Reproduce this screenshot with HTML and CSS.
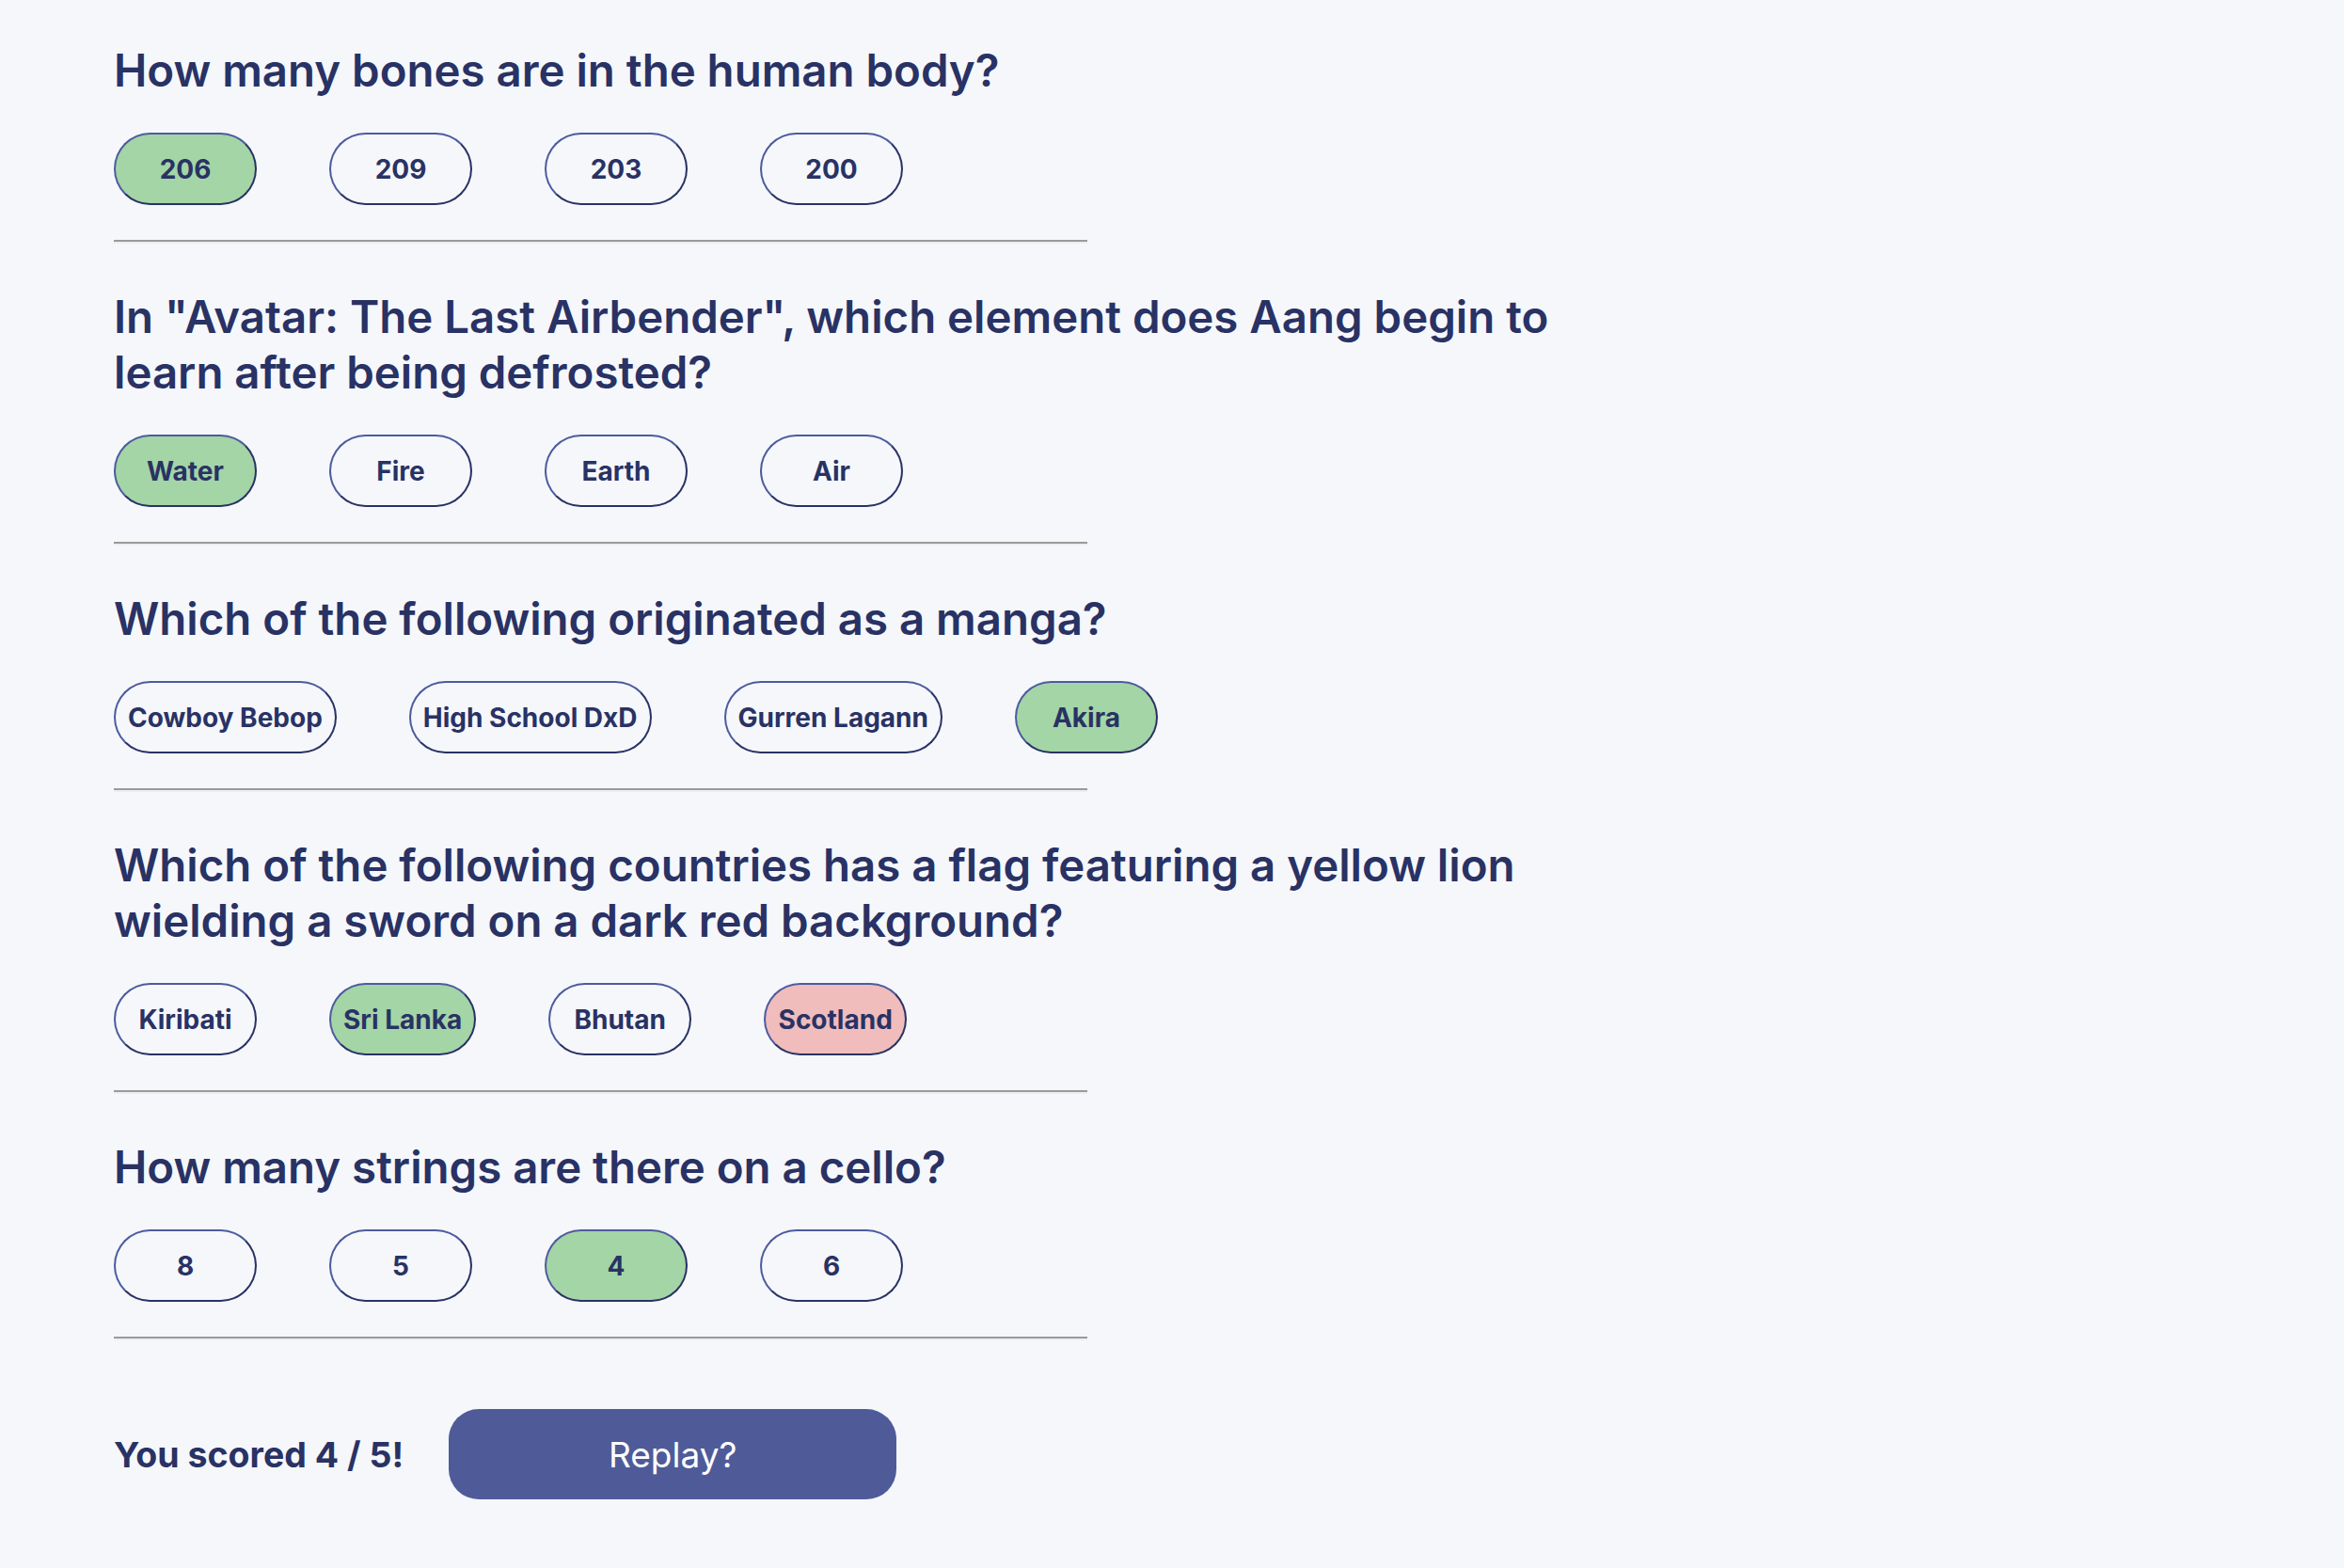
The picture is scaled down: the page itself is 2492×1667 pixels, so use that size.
FILE: index.html
```html
<!DOCTYPE html>
<html lang="en">
<head>
<meta charset="utf-8">
<title>Quizzical</title>
<link rel="stylesheet" href="styles.css">
</head>
<body>
<main class="quiz">
  <section class="question">
    <h2 class="question-title">How many bones are in the human body?</h2>
    <div class="answers">
      <button class="answer correct">206</button>
      <button class="answer">209</button>
      <button class="answer">203</button>
      <button class="answer">200</button>
    </div>
    <hr class="divider">
  </section>
  <section class="question">
    <h2 class="question-title">In "Avatar: The Last Airbender", which element does Aang begin to learn after being defrosted?</h2>
    <div class="answers">
      <button class="answer correct">Water</button>
      <button class="answer">Fire</button>
      <button class="answer">Earth</button>
      <button class="answer">Air</button>
    </div>
    <hr class="divider">
  </section>
  <section class="question">
    <h2 class="question-title">Which of the following originated as a manga?</h2>
    <div class="answers">
      <button class="answer">Cowboy Bebop</button>
      <button class="answer">High School DxD</button>
      <button class="answer">Gurren Lagann</button>
      <button class="answer correct">Akira</button>
    </div>
    <hr class="divider">
  </section>
  <section class="question">
    <h2 class="question-title">Which of the following countries has a flag featuring a yellow lion wielding a sword on a dark red background?</h2>
    <div class="answers">
      <button class="answer">Kiribati</button>
      <button class="answer correct">Sri Lanka</button>
      <button class="answer">Bhutan</button>
      <button class="answer wrong">Scotland</button>
    </div>
    <hr class="divider">
  </section>
  <section class="question">
    <h2 class="question-title">How many strings are there on a cello?</h2>
    <div class="answers">
      <button class="answer">8</button>
      <button class="answer">5</button>
      <button class="answer correct">4</button>
      <button class="answer">6</button>
    </div>
    <hr class="divider">
  </section>
  <div class="score-row">
    <p class="score">You scored 4 / 5!</p>
    <button class="replay">Replay?</button>
  </div>
</main>
</body>
</html>
```
FILE: styles.css
```css
* { box-sizing: border-box; }
html, body {
  margin: 0;
  background: #F5F7FB;
}
body {
  font-family: Inter, "Noto Sans", sans-serif;
  color: #293264;
}
.quiz {
  padding: 45px 0 40px 121px;
}
.question-title {
  margin: 0 0 37px 0;
  max-width: 1580px;
  font-size: 47.4px;
  line-height: 59px;
  font-weight: 600;
  color: #293264;
}
.question + .question .question-title {
  margin-top: 48px;
}
.answers {
  display: flex;
  gap: 77px;
}
.answer {
  min-width: 152px;
  height: 77px;
  padding: 0 13px;
  border: 2.5px solid;
  border-color: #4D5B9E #293264 #293264 #4D5B9E;
  border-radius: 40px;
  background: transparent;
  font-family: Inter, "Noto Sans", sans-serif;
  font-size: 28px;
  font-weight: 700;
  color: #293264;
}
.answer.correct { background: #A4D5A6; }
.answer.wrong { background: #F0BCBC; }
.divider {
  width: 1035px;
  margin: 37px 0 0 0;
  border: 0;
  border-top: 2px solid #9A9A9A;
  border-bottom: 2px solid #EEEEEE;
}
.score-row {
  display: flex;
  align-items: center;
  gap: 48px;
  margin-top: 73px;
}
.score {
  margin: 0;
  font-size: 37.5px;
  font-weight: 700;
  color: #293264;
}
.replay {
  width: 476px;
  height: 96px;
  border: 0;
  border-radius: 32px;
  background: #4F5B99;
  color: #FFFFFF;
  font-family: Inter, "Noto Sans", sans-serif;
  font-size: 37px;
  font-weight: 400;
}
```
